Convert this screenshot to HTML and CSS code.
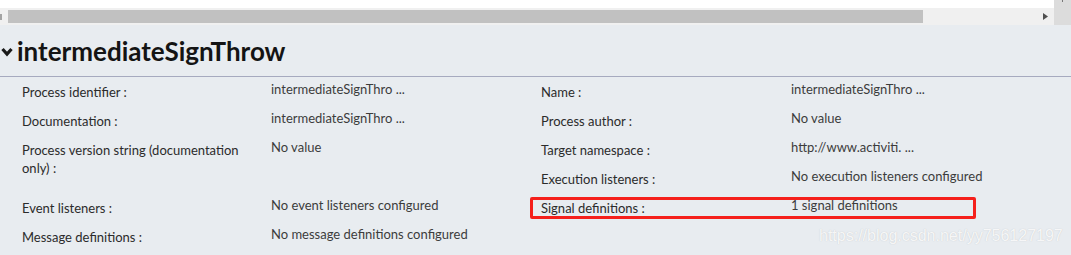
FILE: index.html
```html
<!DOCTYPE html>
<html>
<head>
<meta charset="utf-8">
<link rel="stylesheet" href="styles.css">
</head>
<body>
<div class="topbar">
  <div class="hscroll">
    <div class="white-strip"></div>
    <div class="track">
      <span class="arrow-left"></span>
      <span class="thumb"></span>
      <span class="track-rest"></span>
      <svg class="arrow-right" width="5" height="7" viewBox="0 0 5 7"><polygon points="0,0 5,3.5 0,7" fill="#505050"/></svg>
    </div>
  </div>
  <div class="corner"><span class="corner-tick"></span></div>
</div>

<div class="header">
  <svg class="chevron" width="12" height="10" viewBox="0 0 12 10"><polyline points="1.5,2 6,7 10.5,2" fill="none" stroke="#1a1a1a" stroke-width="3.2"/></svg>
  <h1 class="title">intermediateSignThrow</h1>
</div>

<div class="props">
  <div class="col">
    <div class="row"><div class="label">Process identifier :</div><div class="value">intermediateSignThro ...</div></div>
    <div class="row"><div class="label">Documentation :</div><div class="value">intermediateSignThro ...</div></div>
    <div class="row tall"><div class="label">Process version string (documentation only) :</div><div class="value">No value</div></div>
    <div class="row"><div class="label">Event listeners :</div><div class="value">No event listeners configured</div></div>
    <div class="row"><div class="label">Message definitions :</div><div class="value">No message definitions configured</div></div>
  </div>
  <div class="col">
    <div class="row"><div class="label">Name :</div><div class="value">intermediateSignThro ...</div></div>
    <div class="row"><div class="label">Process author :</div><div class="value">No value</div></div>
    <div class="row"><div class="label">Target namespace :</div><div class="value">http://www.activiti. ...</div></div>
    <div class="row"><div class="label">Execution listeners :</div><div class="value">No execution listeners configured</div></div>
    <div class="row marked"><div class="label">Signal definitions :</div><div class="value">1 signal definitions</div><span class="highlight"></span></div>
  </div>
  <div class="watermark">https://blog.csdn.net/yy756127197</div>
</div>
</body>
</html>
```
FILE: styles.css
```css
html, body {
  margin: 0;
  padding: 0;
}
body {
  width: 1071px;
  height: 255px;
  overflow: hidden;
  background: #e8ecf0;
  font-family: Lato, "Open Sans", sans-serif;
}
.topbar {
  display: flex;
  height: 25px;
}
.hscroll {
  flex: 1;
  display: flex;
  flex-direction: column;
}
.white-strip {
  height: 8px;
  background: #ffffff;
}
.track {
  height: 17px;
  background: #f0f0f0;
  display: flex;
  align-items: center;
}
.arrow-left {
  width: 2px;
  height: 6px;
  background: #a3a3a3;
  margin-right: 6px;
}
.thumb {
  width: 915px;
  height: 13px;
  background: #c1c1c1;
}
.track-rest {
  flex: 1;
}
.arrow-right {
  margin-right: 6px;
}
.corner {
  width: 17px;
  background: #dcdcdc;
  position: relative;
}
.corner-tick {
  position: absolute;
  left: 8px;
  top: 0;
  width: 1px;
  height: 2px;
  background: #777;
}
.header {
  display: flex;
  align-items: center;
  height: 51px;
  border-bottom: 1px solid #a6aabf;
  padding-left: 1px;
}
.chevron {
  margin-right: 4px;
  margin-top: 2px;
}
.title {
  margin: 0;
  font-size: 26px;
  font-weight: 700;
  color: #141414;
  line-height: 30px;
}
.props {
  display: flex;
  position: relative;
  padding-left: 22px;
}
.col {
  width: 519px;
  display: flex;
  flex-direction: column;
}
.col + .col .label {
  width: 250px;
}
.row {
  display: flex;
  height: 29px;
  padding-top: 3px;
  box-sizing: border-box;
  font-size: 13px;
  line-height: 18px;
  position: relative;
}
.row.tall {
  height: 58px;
}
.label {
  width: 249px;
  padding-top: 3px;
  color: #2b2b2b;
  padding-right: 14px;
  box-sizing: border-box;
}
.value {
  color: #3c3c3c;
}
.highlight {
  position: absolute;
  left: -11px;
  top: 4px;
  width: 446px;
  height: 22px;
  box-sizing: border-box;
  border: 3px solid #f5201b;
  border-radius: 2px;
}
.watermark {
  position: absolute;
  left: 819px;
  top: 150px;
  font-family: "Liberation Sans", Arial, sans-serif;
  font-size: 16px;
  color: rgba(255, 255, 255, 0.85);
  text-shadow: 0 0 1px rgba(120, 120, 120, 0.35);
  white-space: nowrap;
}
```
